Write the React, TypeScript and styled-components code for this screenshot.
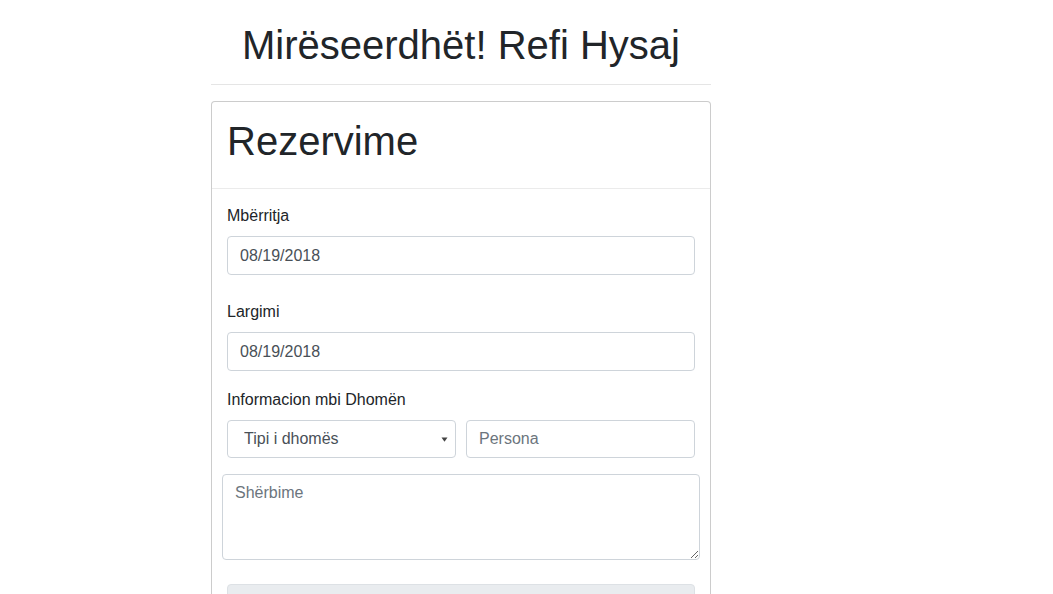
import React from "react";
import styled, { createGlobalStyle } from "styled-components";

const Global = createGlobalStyle`
  html, body { margin: 0; padding: 0; background: #fff; }
  body {
    font-family: "Liberation Sans", Arial, Helvetica, sans-serif;
    font-size: 16px;
    line-height: 1.5;
    color: #212529;
  }
  * { box-sizing: border-box; }
`;

const Page = styled.div`
  width: 500px;
  margin-left: 211px;
`;

const Title = styled.h1`
  margin: 0;
  padding-top: 21px;
  font-size: 40px;
  font-weight: 400;
  line-height: 1.2;
  text-align: center;
`;

const Divider = styled.hr`
  margin: 15px 0 16px;
  border: 0;
  border-top: 1px solid rgba(0, 0, 0, 0.1);
`;

const Card = styled.div`
  border: 1px solid rgba(0, 0, 0, 0.2);
  border-radius: 4px;
  background: #fff;
`;

const CardHeader = styled.div`
  padding: 15px;
  border-bottom: 1px solid rgba(0, 0, 0, 0.08);
`;

const CardTitle = styled.h1`
  margin: 0 0 8px;
  font-size: 40px;
  font-weight: 400;
  line-height: 1.2;
`;

const CardBody = styled.div`
  padding: 15px;
`;

const Group = styled.div<{ $gap: number }>`
  margin-bottom: ${(p) => p.$gap}px;
`;

const Label = styled.label`
  display: block;
  margin-bottom: 8px;
  font-size: 16px;
  line-height: 24px;
`;

const controlBase = `
  display: block;
  width: 100%;
  height: 38px;
  padding: 6px 12px;
  font-family: "Liberation Sans", Arial, Helvetica, sans-serif;
  font-size: 16px;
  line-height: 24px;
  color: #495057;
  background: #fff;
  border: 1px solid #ced4da;
  border-radius: 4px;
  outline: none;
  &::placeholder { color: #6c757d; opacity: 1; }
`;

const Input = styled.input`
  ${controlBase}
`;

const DateInput = styled.input`
  ${controlBase}
  height: 39px;
  padding-top: 7px;
`;

const Row = styled.div`
  display: grid;
  grid-template-columns: 1fr 1fr;
  column-gap: 10px;
  margin-bottom: 16px;
`;

const SelectWrap = styled.div`
  position: relative;
`;

const Select = styled.select`
  ${controlBase}
  appearance: none;
  -webkit-appearance: none;
  padding-left: 16px;
`;

const Caret = styled.svg`
  position: absolute;
  right: 8px;
  top: 17px;
  pointer-events: none;
`;

const TextArea = styled.textarea`
  ${controlBase}
  height: 86px;
  width: calc(100% + 10px);
  margin: 0 -5px 24px;
  resize: vertical;
`;

const Submit = styled.button`
  display: block;
  width: 100%;
  height: 40px;
  background: #e9ecef;
  border: 1px solid #dde1e5;
  border-radius: 4px;
  font-family: "Liberation Sans", Arial, sans-serif;
  font-size: 16px;
  color: #212529;
`;

export default function App() {
  return (
    <>
      <Global />
      <Page>
        <Title>Mirëseerdhët! Refi Hysaj</Title>
        <Divider />
        <Card>
          <CardHeader>
            <CardTitle>Rezervime</CardTitle>
          </CardHeader>
          <CardBody>
            <Group $gap={25}>
              <Label>Mbërritja</Label>
              <DateInput type="text" readOnly value="08/19/2018" />
            </Group>
            <Group $gap={17}>
              <Label>Largimi</Label>
              <DateInput type="text" readOnly value="08/19/2018" />
            </Group>
            <Label>Informacion mbi Dhomën</Label>
            <Row>
              <SelectWrap>
                <Select defaultValue="">
                  <option value="">Tipi i dhomës</option>
                </Select>
                <Caret width="7" height="5" viewBox="0 0 7 5">
                  <path d="M0.5 0.5 L6.5 0.5 L3.5 4.8 Z" fill="#444" />
                </Caret>
              </SelectWrap>
              <Input type="text" placeholder="Persona" />
            </Row>
            <TextArea placeholder="Shërbime" rows={3} />
            <Submit type="button">&nbsp;</Submit>
          </CardBody>
        </Card>
      </Page>
    </>
  );
}
